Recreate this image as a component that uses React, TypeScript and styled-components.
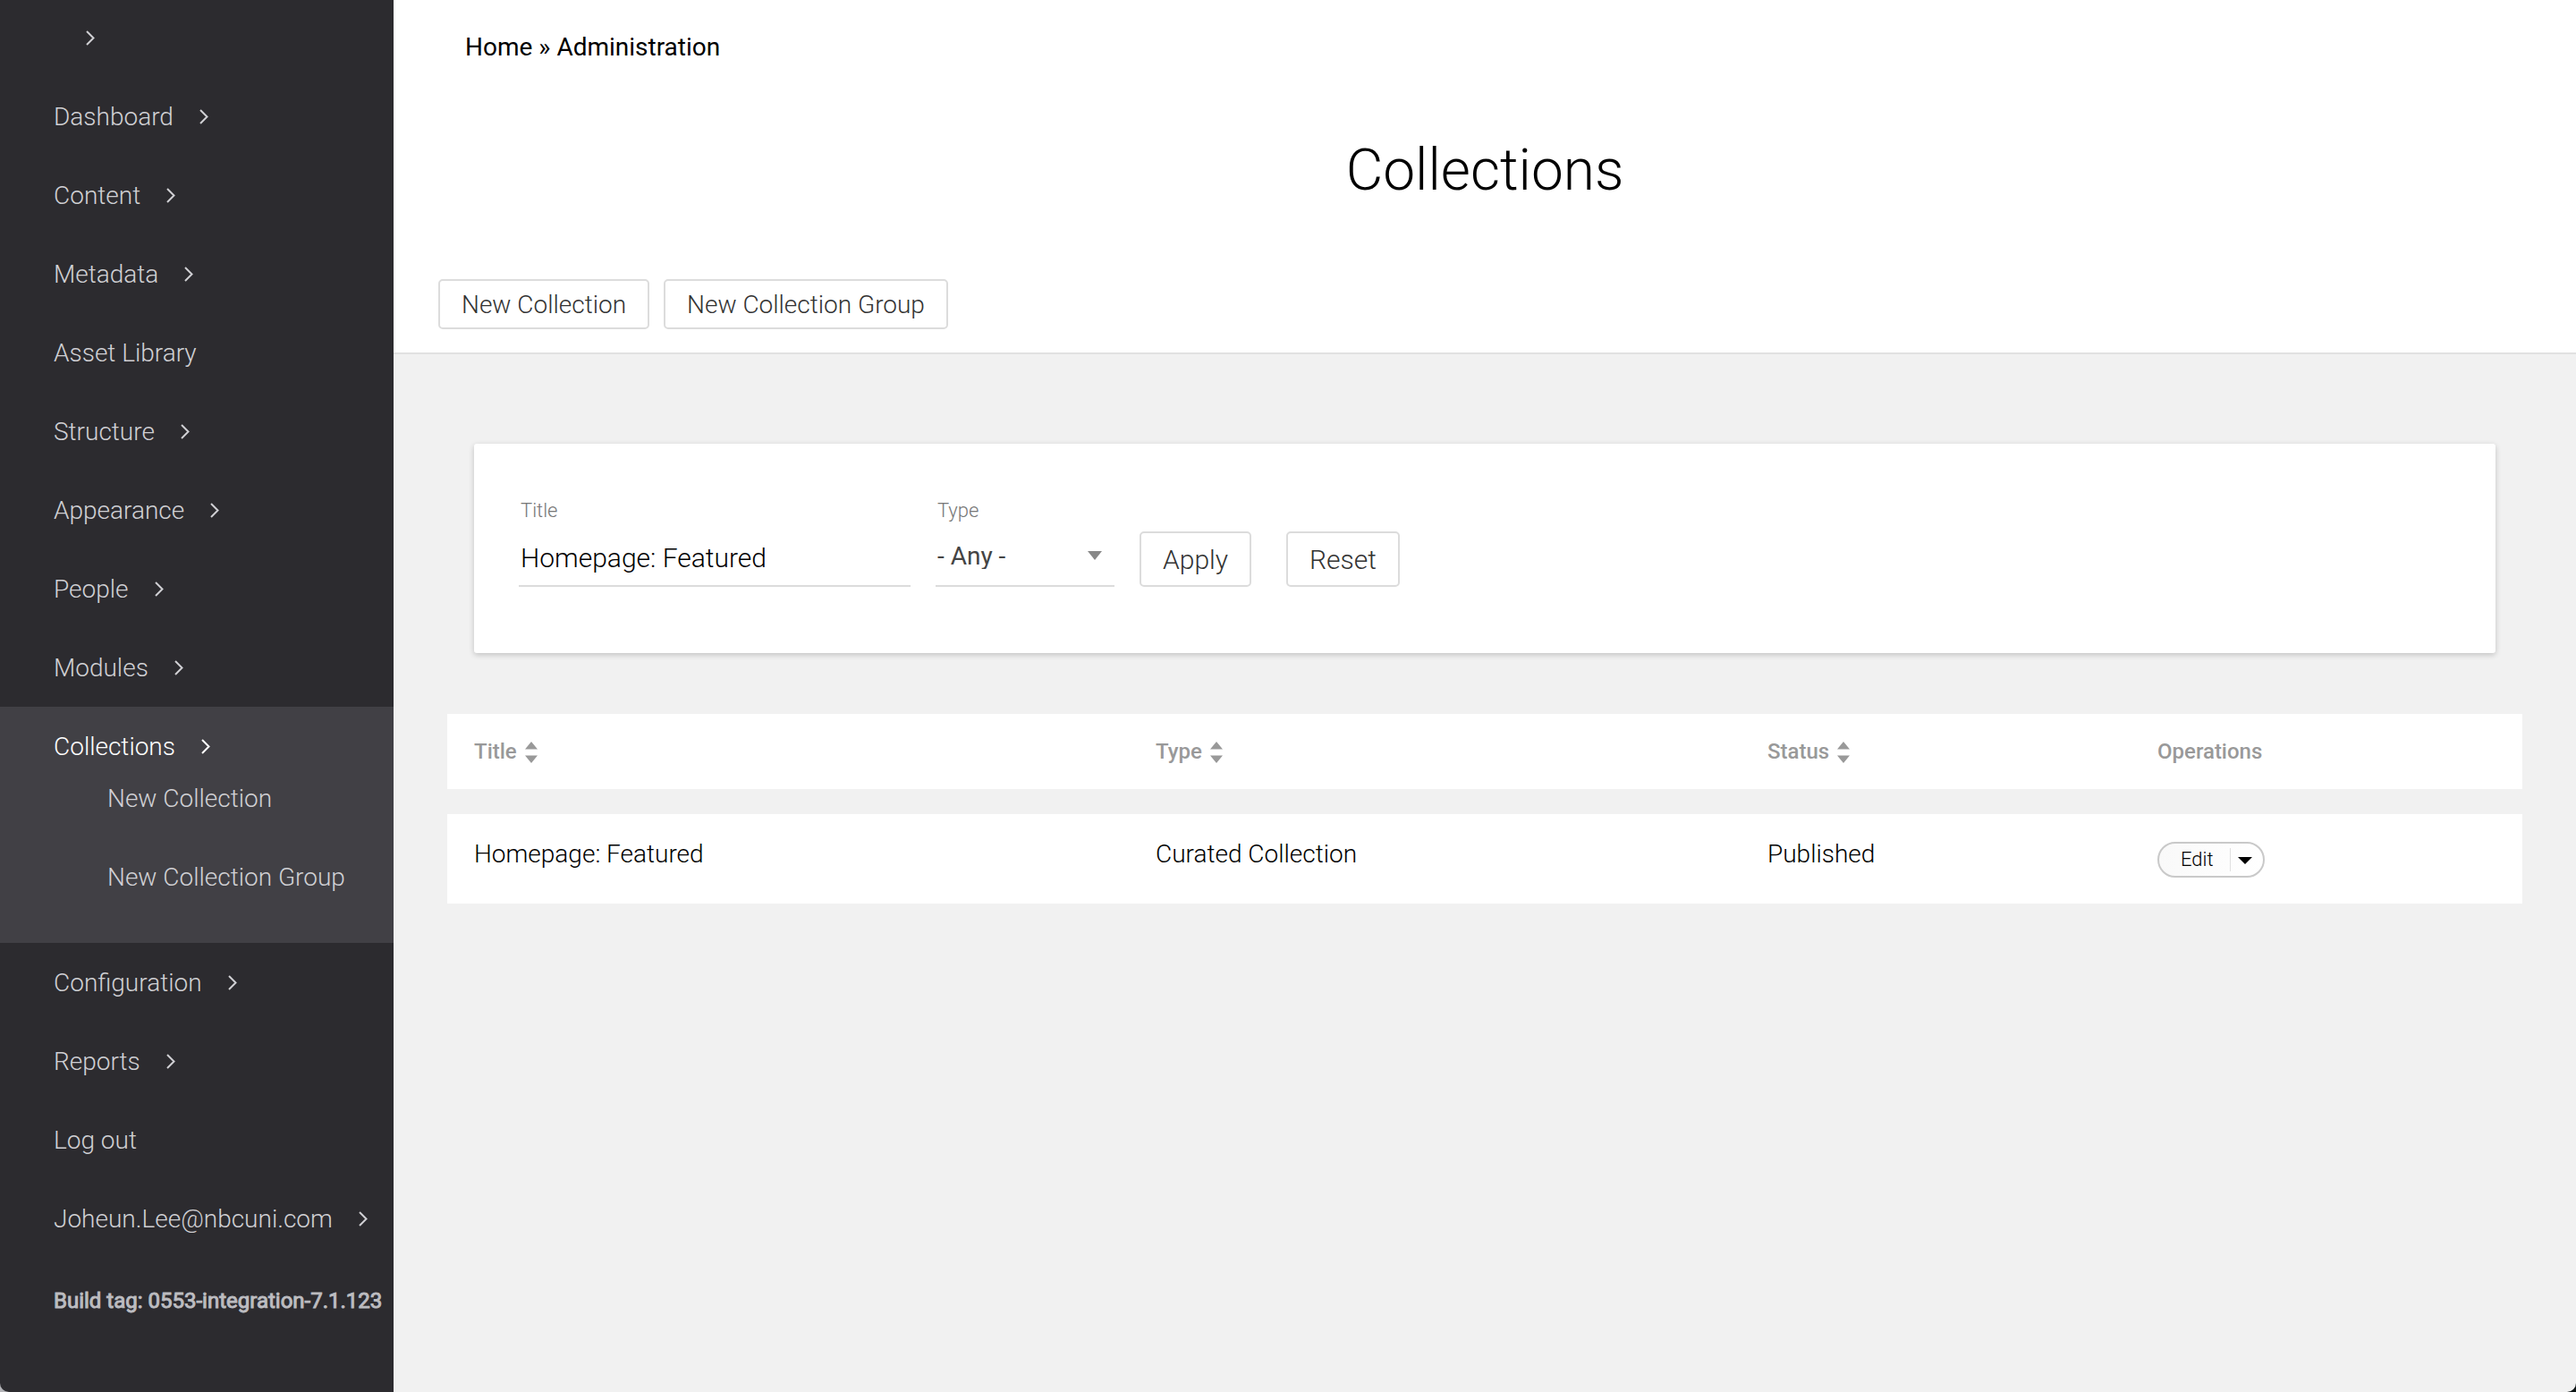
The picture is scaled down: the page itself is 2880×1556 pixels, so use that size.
import React from "react";
import styled, { createGlobalStyle } from "styled-components";

const GlobalStyle = createGlobalStyle`
  *, *::before, *::after { box-sizing: border-box; }
  body {
    margin: 0;
    background: linear-gradient(90deg, #b4b4b8 50%, #0c1414 50%);
    font-family: Roboto, "Liberation Sans", sans-serif;
    font-size: 28px;
    line-height: 28px;
    color: #000;
  }
  a { color: inherit; text-decoration: none; }
  button, input, select { font: inherit; margin: 0; }
`;

const Page = styled.div`
  display: grid;
  grid-template-columns: 440px 1fr;
  min-height: 100vh;
`;

const Sidebar = styled.nav`
  background: #2c2b2f;
  border-bottom-left-radius: 10px;
  color: #d0d0d4;
`;

const Menu = styled.ul`
  list-style: none;
  margin: -2px 0 0;
  padding: 0;
`;

const MenuItem = styled.li<{ $open?: boolean }>`
  background: ${(p) => (p.$open ? "#414045" : "transparent")};
  padding-bottom: ${(p) => (p.$open ? "29px" : "0")};
`;

const MenuLink = styled.a<{ $open?: boolean }>`
  display: flex;
  align-items: center;
  gap: 29px;
  padding: 31px 0 ${(p) => (p.$open ? "0" : "29px")} 60px;
  color: ${(p) => (p.$open ? "#fff" : "inherit")};
  font-weight: 300;
  white-space: pre;
`;

const SubMenu = styled.ul`
  list-style: none;
  margin: 0;
  padding: 0;
`;

const SubLink = styled.a`
  display: block;
  padding: 30px 0 30px 120px;
  font-weight: 300;
`;

const BuildTag = styled.p`
  margin: 0;
  padding: 34px 0 0 60px;
  font-size: 24px;
  font-weight: 400;
  color: #bcbcc0;
  -webkit-text-stroke: 1px currentColor;
  white-space: nowrap;
`;

const Main = styled.main`
  background: #f1f1f1;
  border-bottom-right-radius: 10px;
`;

const Header = styled.header`
  background: #fff;
  border-bottom: 2px solid #e1e1e1;
  padding: 39px 50px 26px;
`;

const Breadcrumb = styled.nav`
  padding-left: 30px;
`;

const Heading = styled.h1`
  margin: 84px 0 81px;
  font-size: 64px;
  line-height: 80px;
  font-weight: 300;
  text-align: center;
`;

const Actions = styled.div`
  display: flex;
  gap: 16px;
`;

const Button = styled.button<{ $large?: boolean }>`
  height: ${(p) => (p.$large ? "62px" : "56px")};
  padding: 2px 24px 0;
  border: 2px solid #dcdcdc;
  border-radius: 5px;
  background: #fff;
  color: #333;
  font-size: ${(p) => (p.$large ? "30px" : "28px")};
  font-weight: 300;
  cursor: pointer;
`;

const Content = styled.div`
  padding: 100px 60px 0;
`;

const FilterCard = styled.form`
  display: flex;
  align-items: flex-end;
  gap: 28px;
  margin: 0 30px;
  padding: 62px 50px 74px;
  background: #fff;
  border-radius: 3px;
  box-shadow: 0 2px 6px rgba(0, 0, 0, 0.2);
`;

const Field = styled.div<{ $width: number }>`
  display: flex;
  flex-direction: column;
  width: ${(p) => p.$width}px;
`;

const FieldLabel = styled.label`
  padding-left: 2px;
  font-size: 22px;
  line-height: 26px;
  font-weight: 300;
  color: #777;
`;

const TextInput = styled.input`
  width: 100%;
  height: 72px;
  padding: 8px 2px 0;
  border: 0;
  border-bottom: 2px solid #dcdcdc;
  background: transparent;
  color: #000;
  font-size: 30px;
  font-weight: 300;
  outline: none;
`;

const SelectBox = styled.div`
  position: relative;
`;

const SelectInput = styled.select`
  appearance: none;
  display: block;
  width: 100%;
  height: 72px;
  padding: 6px 2px 0;
  border: 0;
  border-bottom: 2px solid #dcdcdc;
  border-radius: 0;
  background: transparent;
  color: #444;
  outline: none;
`;

const SelectArrow = styled.svg`
  position: absolute;
  right: 14px;
  top: 32px;
  pointer-events: none;
`;

const FormButtons = styled.div`
  display: flex;
  gap: 39px;
`;

const Table = styled.table`
  width: 100%;
  margin-top: 40px;
  table-layout: fixed;
  border-collapse: separate;
  border-spacing: 0 28px;
  text-align: left;
`;

const Col = styled.col<{ $width: number }>`
  width: ${(p) => p.$width}px;
`;

const HeadCell = styled.th`
  height: 84px;
  padding: 0 30px;
  background: #fff;
  font-size: 24px;
  font-weight: 500;
  color: #999;
`;

const SortLink = styled.a`
  display: inline-flex;
  align-items: center;
  gap: 9px;
`;

const Cell = styled.td`
  height: 100px;
  padding: 31px 30px 0;
  background: #fff;
  font-weight: 300;
  vertical-align: top;
`;

const SplitButton = styled.div`
  display: flex;
  width: max-content;
  align-items: center;
  height: 40px;
  border: 2px solid #c9c9c9;
  border-radius: 20px;
  background: linear-gradient(90deg, #f9f9f9, #fff);
`;

const EditLink = styled.a`
  padding: 0 18px 0 24px;
  border-right: 1px solid #e0e0e0;
  font-size: 22px;
  line-height: 26px;
`;

const DropToggle = styled.button`
  display: flex;
  align-items: center;
  height: 36px;
  padding: 2px 12px 0 8px;
  border: 0;
  background: transparent;
  cursor: pointer;
`;

const Chevron = () => (
  <svg width="10" height="18" viewBox="0 0 10 18" fill="none" stroke="currentColor" strokeWidth="2" aria-hidden="true">
    <path d="M1 1l7.5 7.5L1 16" />
  </svg>
);

const SortIcon = () => (
  <svg width="14" height="26" viewBox="0 0 14 26" fill="currentColor" aria-hidden="true">
    <path d="M7 2l7 8.500H0zM0 17.500h14L7 26z" />
  </svg>
);

type Entry = { label: string; arrow: boolean; children?: string[] };

const entries: Entry[] = [
  { label: " ", arrow: true },
  { label: "Dashboard", arrow: true },
  { label: "Content", arrow: true },
  { label: "Metadata", arrow: true },
  { label: "Asset Library", arrow: false },
  { label: "Structure", arrow: true },
  { label: "Appearance", arrow: true },
  { label: "People", arrow: true },
  { label: "Modules", arrow: true },
  { label: "Collections", arrow: true, children: ["New Collection", "New Collection Group"] },
  { label: "Configuration", arrow: true },
  { label: "Reports", arrow: true },
  { label: "Log out", arrow: false },
  { label: "Joheun.Lee@nbcuni.com", arrow: true },
];

const columns = [
  { label: "Title", width: 762, sortable: true },
  { label: "Type", width: 684, sortable: true },
  { label: "Status", width: 436, sortable: true },
  { label: "Operations", width: 438, sortable: false },
];

export default function App() {
  return (
    <>
      <GlobalStyle />
      <Page>
        <Sidebar aria-label="Administration menu">
          <Menu>
            {entries.map((entry) => (
              <MenuItem key={entry.label} $open={!!entry.children}>
                <MenuLink href="#" $open={!!entry.children}>
                  <span>{entry.label}</span>
                  {entry.arrow && <Chevron />}
                </MenuLink>
                {entry.children && (
                  <SubMenu>
                    {entry.children.map((child) => (
                      <li key={child}>
                        <SubLink href="#">{child}</SubLink>
                      </li>
                    ))}
                  </SubMenu>
                )}
              </MenuItem>
            ))}
          </Menu>
          <BuildTag>Build tag: 0553-integration-7.1.123</BuildTag>
        </Sidebar>
        <Main>
          <Header>
            <Breadcrumb aria-label="Breadcrumb">
              <a href="#">Home</a> » <a href="#">Administration</a>
            </Breadcrumb>
            <Heading>Collections</Heading>
            <Actions>
              <Button type="button">New Collection</Button>
              <Button type="button">New Collection Group</Button>
            </Actions>
          </Header>
          <Content>
            <FilterCard onSubmit={(e) => e.preventDefault()}>
              <Field $width={438}>
                <FieldLabel htmlFor="filter-title">Title</FieldLabel>
                <TextInput id="filter-title" type="text" defaultValue="Homepage: Featured" />
              </Field>
              <Field $width={200}>
                <FieldLabel htmlFor="filter-type">Type</FieldLabel>
                <SelectBox>
                  <SelectInput id="filter-type" defaultValue="any">
                    <option value="any">- Any -</option>
                  </SelectInput>
                  <SelectArrow width="16" height="10" viewBox="0 0 16 10" fill="#888" aria-hidden="true">
                    <path d="M0 0h16L8 10z" />
                  </SelectArrow>
                </SelectBox>
              </Field>
              <FormButtons>
                <Button type="submit" $large>
                  Apply
                </Button>
                <Button type="reset" $large>
                  Reset
                </Button>
              </FormButtons>
            </FilterCard>
            <Table>
              <colgroup>
                {columns.map((c) => (
                  <Col key={c.label} $width={c.width} />
                ))}
              </colgroup>
              <thead>
                <tr>
                  {columns.map((c) => (
                    <HeadCell key={c.label} scope="col">
                      {c.sortable ? (
                        <SortLink href="#">
                          {c.label}
                          <SortIcon />
                        </SortLink>
                      ) : (
                        c.label
                      )}
                    </HeadCell>
                  ))}
                </tr>
              </thead>
              <tbody>
                <tr>
                  <Cell>Homepage: Featured</Cell>
                  <Cell>Curated Collection</Cell>
                  <Cell>Published</Cell>
                  <Cell>
                    <SplitButton>
                      <EditLink href="#">Edit</EditLink>
                      <DropToggle type="button" aria-label="More operations">
                        <svg width="16" height="8" viewBox="0 0 16 8" aria-hidden="true">
                          <path d="M0 0h16L8 8z" />
                        </svg>
                      </DropToggle>
                    </SplitButton>
                  </Cell>
                </tr>
              </tbody>
            </Table>
          </Content>
        </Main>
      </Page>
    </>
  );
}
